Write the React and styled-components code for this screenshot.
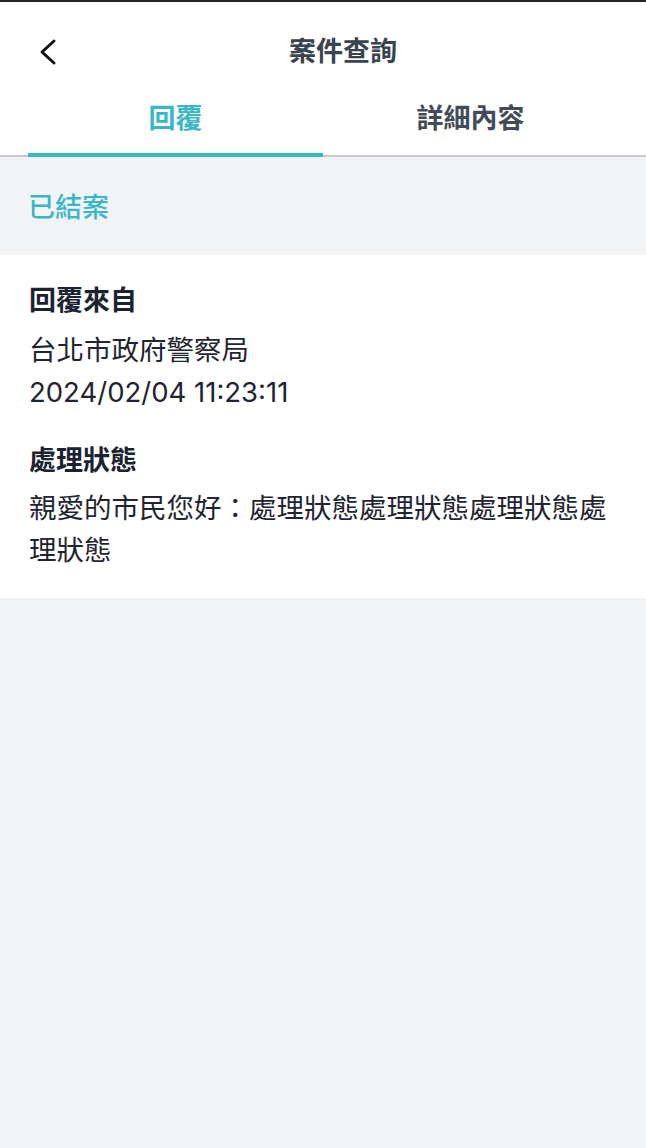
import React, { useState } from "react";
import styled, { createGlobalStyle } from "styled-components";

const GlobalStyle = createGlobalStyle`
  html, body {
    margin: 0;
    padding: 0;
    background: #f2f3f5;
  }
  body {
    font-family: "Inter", "Noto Sans CJK TC", "Noto Sans", sans-serif;
  }
`;

const Page = styled.div`
  min-height: 1148px;
  background: #f2f3f5;
  border-top: 2px solid #232323;
  box-sizing: border-box;
`;

const Top = styled.div`
  background: #ffffff;
`;

const Header = styled.div`
  height: 96px;
  box-sizing: border-box;
  display: flex;
  align-items: center;
  padding: 4px 28px 0;
`;

const BackButton = styled.button`
  width: 40px;
  height: 40px;
  display: flex;
  align-items: center;
  justify-content: center;
  padding: 0;
  border: none;
  background: transparent;
  cursor: pointer;
`;

const Title = styled.h1`
  flex: 1;
  margin: 0;
  text-align: center;
  font-size: 27px;
  font-weight: 700;
  color: #3a4350;
  line-height: 40px;
`;

const TabBar = styled.div`
  box-shadow: inset 0 -2px 0 #c6cacf;
`;

const TabRow = styled.div`
  display: flex;
  margin: 0 28px;
`;

const Tab = styled.button`
  flex: 1;
  padding: 1px 0 14px;
  border: none;
  border-bottom: 4px solid ${(p) => (p.$active ? "#38b7c8" : "transparent")};
  background: transparent;
  font-family: inherit;
  font-size: 27px;
  font-weight: 700;
  line-height: 40px;
  color: ${(p) => (p.$active ? "#38b7c8" : "#434b57")};
  cursor: pointer;
`;

const StatusBar = styled.div`
  padding: 30px 28px 27px;
  font-size: 27px;
  font-weight: 500;
  line-height: 41px;
  color: #38b7c8;
`;

const Card = styled.div`
  background: #ffffff;
  padding: 25px 29px 27px;
`;

const Block = styled.div`
  & + & {
    margin-top: 27px;
  }
`;

const Label = styled.div`
  font-size: 27px;
  font-weight: 700;
  line-height: 42px;
  color: #1b2330;
  margin-bottom: ${(p) => p.$gap || 7}px;
`;

const Text = styled.div`
  font-size: 27.5px;
  font-weight: 400;
  line-height: 42px;
  color: #1e2530;
`;

function ChevronLeft() {
  return (
    <svg width="20" height="28" viewBox="0 0 20 28">
      <polyline
        points="16,3 4,14 16,25"
        fill="none"
        stroke="#111111"
        strokeWidth="3"
        strokeLinecap="round"
        strokeLinejoin="round"
      />
    </svg>
  );
}

export default function App() {
  const [tab, setTab] = useState(0);
  return (
    <Page>
      <GlobalStyle />
      <Top>
        <Header>
          <BackButton aria-label="back">
            <ChevronLeft />
          </BackButton>
          <Title>案件查詢</Title>
        </Header>
        <TabBar>
          <TabRow>
            <Tab $active={tab === 0} onClick={() => setTab(0)}>
              回覆
            </Tab>
            <Tab $active={tab === 1} onClick={() => setTab(1)}>
              詳細內容
            </Tab>
          </TabRow>
        </TabBar>
      </Top>
      <StatusBar>已結案</StatusBar>
      <Card>
        <Block>
          <Label>回覆來自</Label>
          <Text>台北市政府警察局</Text>
          <Text>2024/02/04 11:23:11</Text>
        </Block>
        <Block>
          <Label $gap={5}>處理狀態</Label>
          <Text>親愛的市民您好：處理狀態處理狀態處理狀態處理狀態</Text>
        </Block>
      </Card>
    </Page>
  );
}
